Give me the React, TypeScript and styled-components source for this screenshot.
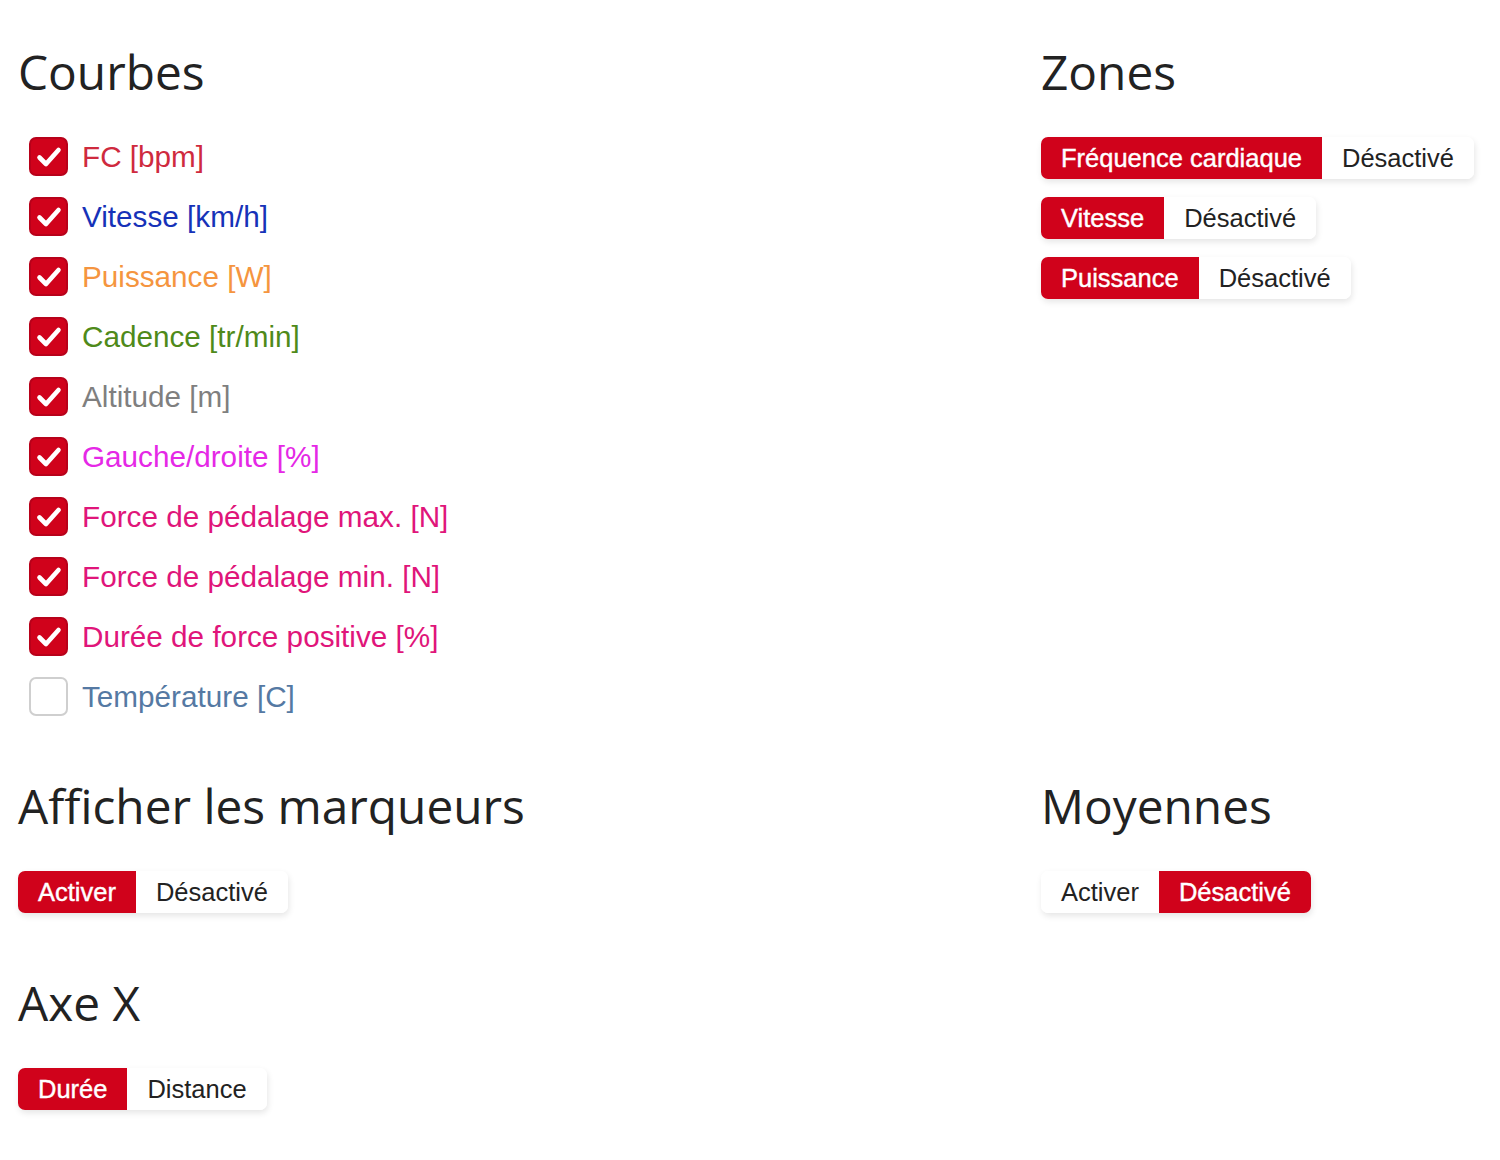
import * as React from 'react'
import styled, { createGlobalStyle } from 'styled-components'

const RED = '#d0021b'

const GlobalStyle = createGlobalStyle`
  html, body {
    margin: 0;
    padding: 0;
    background: #fff;
  }
  body {
    font-family: "Liberation Sans", Arial, sans-serif;
    color: #222;
  }
`

const Page = styled.div`
  display: grid;
  grid-template-columns: 1005px 1fr;
  column-gap: 18px;
  row-gap: 64px;
  padding: 46px 18px 40px;
  align-items: start;
`

const Section = styled.section`
  display: flex;
  flex-direction: column;
  gap: 39px;
`

const Heading = styled.h2`
  margin: 0;
  font-family: "Open Sans", sans-serif;
  font-weight: 400;
  font-size: 47.8px;
  line-height: 52px;
  color: #222;
`

const CheckList = styled.ul`
  list-style: none;
  margin: 0;
  padding: 0 0 0 11px;
  display: flex;
  flex-direction: column;
  gap: 21px;
`

const CheckRow = styled.li<{ $color: string }>`
  display: flex;
  align-items: center;
  gap: 14px;
  height: 39px;
  font-size: 29.7px;
  color: ${p => p.$color};
  cursor: pointer;
`

const Box = styled.span<{ $checked: boolean }>`
  box-sizing: border-box;
  width: 39px;
  height: 39px;
  border-radius: 7px;
  display: flex;
  align-items: center;
  justify-content: center;
  flex-shrink: 0;
  background: ${p => (p.$checked ? RED : '#fff')};
  border: 2px solid ${p => (p.$checked ? '#b8011a' : '#cfcfcf')};
`

const ToggleStack = styled.div`
  display: flex;
  flex-direction: column;
  align-items: flex-start;
  gap: 18px;
`

const Toggle = styled.div`
  display: inline-flex;
  height: 42px;
  border-radius: 7px;
  box-shadow: 1px 3px 6px rgba(0, 0, 0, 0.1);
`

const Segment = styled.button<{ $active: boolean }>`
  border: none;
  margin: 0;
  padding: 0 20px;
  height: 42px;
  font-family: "Liberation Sans", Arial, sans-serif;
  font-size: 25.5px;
  background: ${p => (p.$active ? RED : '#fff')};
  color: ${p => (p.$active ? '#fff' : '#222')};
  -webkit-text-stroke: ${p => (p.$active ? '0.4px #fff' : '0')};
  cursor: pointer;
  &:first-child {
    border-radius: 7px 0 0 7px;
  }
  &:last-child {
    border-radius: 0 7px 7px 0;
  }
`

const Check = () => (
  <svg width="26" height="22" viewBox="0 0 26 22" fill="none">
    <path
      d="M3.5 11.5 L10 18 L22.5 4"
      stroke="#fff"
      strokeWidth="4.6"
      strokeLinecap="round"
      strokeLinejoin="round"
    />
  </svg>
)

const curves = [
  { label: 'FC [bpm]', color: '#cf2a3e', checked: true },
  { label: 'Vitesse [km/h]', color: '#1632b8', checked: true },
  { label: 'Puissance [W]', color: '#f5953f', checked: true },
  { label: 'Cadence [tr/min]', color: '#4f8a1a', checked: true },
  { label: 'Altitude [m]', color: '#7f7f7f', checked: true },
  { label: 'Gauche/droite [%]', color: '#e528e6', checked: true },
  { label: 'Force de pédalage max. [N]', color: '#e0157a', checked: true },
  { label: 'Force de pédalage min. [N]', color: '#e0157a', checked: true },
  { label: 'Durée de force positive [%]', color: '#e0157a', checked: true },
  { label: 'Température [C]', color: '#5579a3', checked: false },
]

type Opt = { label: string; active: boolean }

const ToggleGroup = ({ options }: { options: Opt[] }) => (
  <Toggle>
    {options.map(o => (
      <Segment key={o.label} $active={o.active}>
        {o.label}
      </Segment>
    ))}
  </Toggle>
)

export default function App() {
  const [checks, setChecks] = React.useState(curves.map(c => c.checked))
  return (
    <>
      <GlobalStyle />
      <Page>
        <Section>
          <Heading>Courbes</Heading>
          <CheckList>
            {curves.map((c, i) => (
              <CheckRow
                key={c.label}
                $color={c.color}
                onClick={() => setChecks(s => s.map((v, j) => (j === i ? !v : v)))}
              >
                <Box $checked={checks[i]}>{checks[i] && <Check />}</Box>
                {c.label}
              </CheckRow>
            ))}
          </CheckList>
        </Section>
        <Section>
          <Heading>Zones</Heading>
          <ToggleStack>
            <ToggleGroup options={[{ label: 'Fréquence cardiaque', active: true }, { label: 'Désactivé', active: false }]} />
            <ToggleGroup options={[{ label: 'Vitesse', active: true }, { label: 'Désactivé', active: false }]} />
            <ToggleGroup options={[{ label: 'Puissance', active: true }, { label: 'Désactivé', active: false }]} />
          </ToggleStack>
        </Section>
        <Section>
          <Heading>Afficher les marqueurs</Heading>
          <ToggleStack>
            <ToggleGroup options={[{ label: 'Activer', active: true }, { label: 'Désactivé', active: false }]} />
          </ToggleStack>
        </Section>
        <Section>
          <Heading>Moyennes</Heading>
          <ToggleStack>
            <ToggleGroup options={[{ label: 'Activer', active: false }, { label: 'Désactivé', active: true }]} />
          </ToggleStack>
        </Section>
        <Section>
          <Heading>Axe X</Heading>
          <ToggleStack>
            <ToggleGroup options={[{ label: 'Durée', active: true }, { label: 'Distance', active: false }]} />
          </ToggleStack>
        </Section>
      </Page>
    </>
  )
}
